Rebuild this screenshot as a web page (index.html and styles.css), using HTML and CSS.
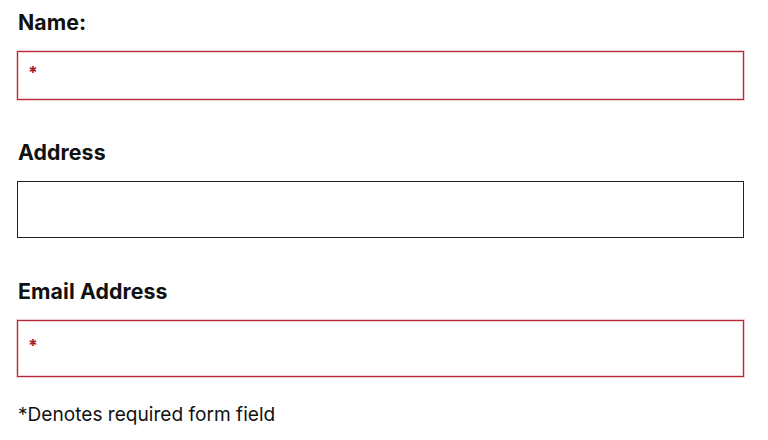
FILE: index.html
```html
<!DOCTYPE html>
<html>
<head>
    <title>Contact form</title>
    <link rel="stylesheet" href="styles.css">
</head>
<body>
    <form class="contact-form">
        <div class="field">
            <label class="field-label" for="name">Name:</label>
            <div class="field-box required short-box">
                <span class="req-star">*</span>
                <input type="text" id="name" class="field-input">
            </div>
        </div>
        <div class="field">
            <label class="field-label" for="address">Address</label>
            <div class="field-box">
                <input type="text" id="address" class="field-input">
            </div>
        </div>
        <div class="field last-field">
            <label class="field-label" for="email">Email Address</label>
            <div class="field-box required">
                <span class="req-star">*</span>
                <input type="email" id="email" class="field-input">
            </div>
        </div>
        <p class="form-note">*Denotes required form field</p>
    </form>
</body>
</html>
```

FILE: styles.css
```css
body {
    font-family: Inter, "Open Sans", sans-serif;
    margin: 0;
    padding: 0;
    background-color: #fff;
    color: #111;
}

.contact-form {
    padding: 8px 24px 0 17px;
    display: flex;
    flex-direction: column;
}

.field {
    display: flex;
    flex-direction: column;
    margin-bottom: 38px;
}

.field:nth-child(2) {
    margin-bottom: 39px;
}

.field.last-field {
    margin-bottom: 25px;
}

.field-label {
    font-size: 21.3px;
    font-weight: 700;
    line-height: 28px;
    margin: 0 0 15px 1px;
    letter-spacing: 0.1px;
}

.field-box {
    display: flex;
    align-items: center;
    height: 57px;
    border: 1px solid #222;
    box-sizing: border-box;
    padding: 0 10px;
}

.field-box.short-box {
    height: 49px;
}

.field-box.required {
    border: 1px solid #b52a38;
    box-shadow: 0 0 0 1px rgba(214, 110, 120, 0.35), inset 0 0 0 1px rgba(214, 110, 120, 0.3);
}

.req-star {
    color: #a3202c;
    font-size: 17px;
    font-weight: 800;
    line-height: 1;
    margin-top: -4px;
}

.field-input {
    flex: 1;
    border: none;
    outline: none;
    background: transparent;
    font-family: inherit;
    font-size: 16px;
}

.form-note {
    margin: 0 0 0 1px;
    font-size: 19.1px;
    line-height: 24px;
}
```
